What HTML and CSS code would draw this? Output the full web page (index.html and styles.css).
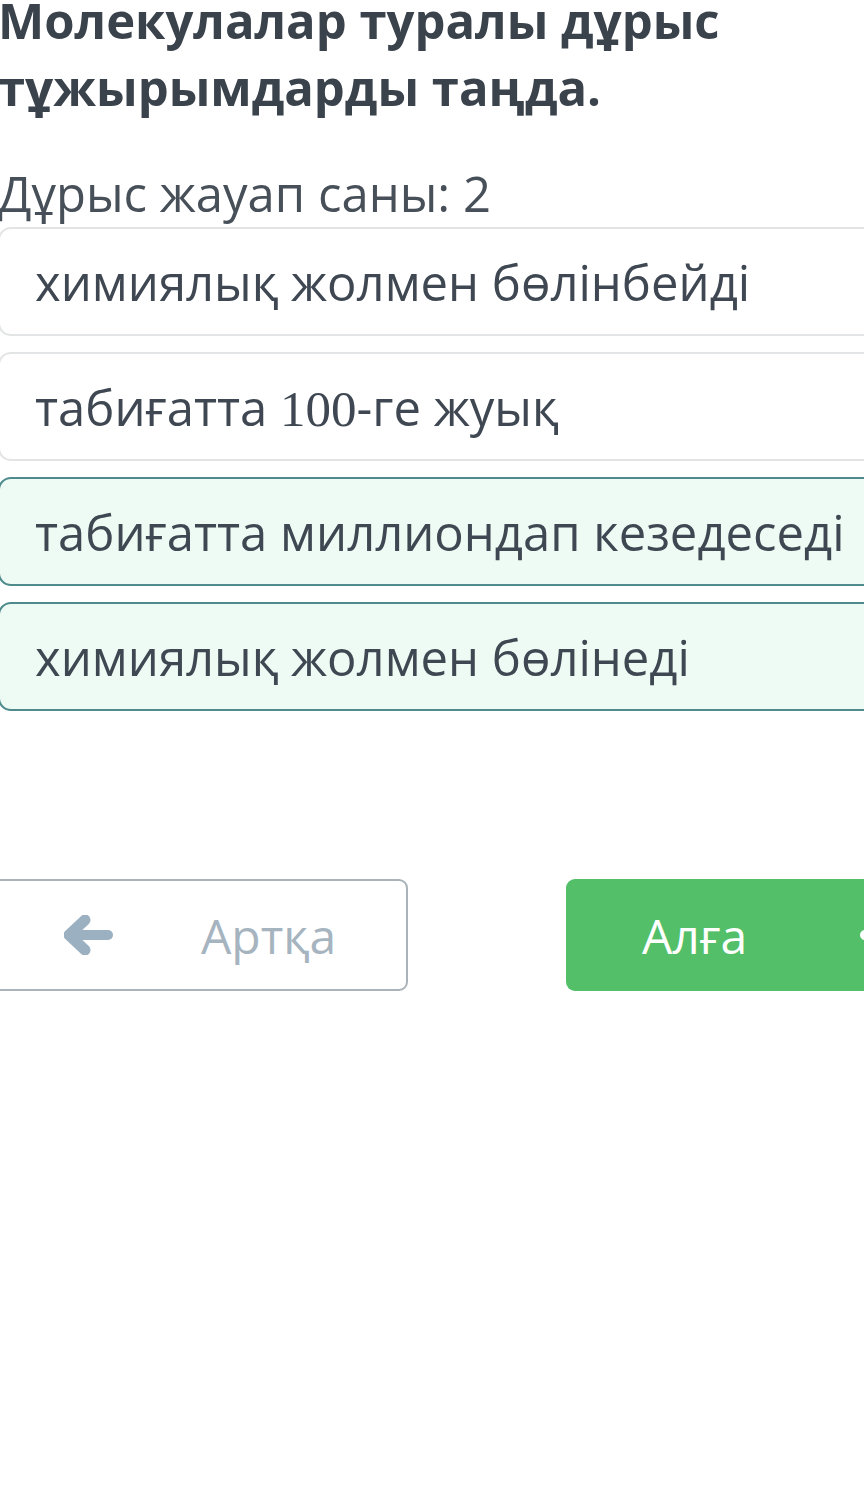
FILE: index.html
```html
<!DOCTYPE html>
<html lang="kk">
<head>
<meta charset="utf-8">
<link rel="stylesheet" href="styles.css">
</head>
<body>
<main class="quiz">
  <h1 class="question">Молекулалар туралы дұрыс тұжырымдарды таңда.</h1>
  <p class="hint">Дұрыс жауап саны: 2</p>
  <ul class="options">
    <li class="option"><span>химиялық жолмен бөлінбейді</span></li>
    <li class="option"><span>табиғатта <span class="num">100</span>-ге жуық</span></li>
    <li class="option selected"><span>табиғатта миллиондап кезедеседі</span></li>
    <li class="option selected"><span>химиялық жолмен бөлінеді</span></li>
  </ul>
  <div class="nav">
    <button class="btn back">
      <svg class="arrow" viewBox="0 0 50 40" width="50" height="40" aria-hidden="true">
        <path d="M21 5 L5 20 L21 35" fill="none" stroke="currentColor" stroke-width="11" stroke-linecap="round" stroke-linejoin="round"/>
        <path d="M9 20 H44" fill="none" stroke="currentColor" stroke-width="10" stroke-linecap="round"/>
      </svg>
      <span>Артқа</span>
    </button>
    <button class="btn next">
      <span>Алға</span>
      <svg class="arrow" viewBox="0 0 50 40" width="50" height="40" aria-hidden="true">
        <path d="M29 5 L45 20 L29 35" fill="none" stroke="currentColor" stroke-width="11" stroke-linecap="round" stroke-linejoin="round"/>
        <path d="M6 20 H41" fill="none" stroke="currentColor" stroke-width="10" stroke-linecap="round"/>
      </svg>
    </button>
  </div>
</main>
</body>
</html>
```

FILE: styles.css
```css
html, body {
  margin: 0;
  padding: 0;
  background: #ffffff;
  overflow: hidden;
}
body {
  font-family: "Open Sans", "Noto Sans", sans-serif;
  color: #3d4650;
}
.quiz {
  margin-left: -2px;
  width: 1000px;
}
.question {
  margin: -13px 0 0 0;
  font-size: 49px;
  font-weight: 700;
  line-height: 67px;
  color: #3a424c;
  width: 780px;
}
.hint {
  margin: 42px 0 4px 0;
  font-size: 49px;
  line-height: 60px;
  color: #474f58;
}
.options {
  list-style: none;
  margin: 0;
  padding: 0;
  display: flex;
  flex-direction: column;
  gap: 16px;
}
.option {
  box-sizing: border-box;
  height: 109px;
  display: flex;
  align-items: center;
  padding-left: 35px;
  border: 2px solid #e3e4e5;
  border-radius: 13px;
  font-size: 49px;
  color: #3f4852;
  background: #fff;
  white-space: nowrap;
}
.option.selected {
  border-color: #4f8b8c;
  background: #eefaf4;
}
.num {
  font-family: "Liberation Serif", serif;
  font-size: 51px;
}
.nav {
  margin-top: 168px;
  display: flex;
  gap: 158px;
  margin-left: -12px;
}
.btn {
  box-sizing: border-box;
  width: 422px;
  height: 112px;
  border-radius: 9px;
  font-family: "Open Sans", "Noto Sans", sans-serif;
  font-size: 48px;
  display: flex;
  align-items: center;
  padding: 0;
}
.btn.back {
  background: #fff;
  border: 2px solid #aab3b9;
  color: #a6b4bf;
  padding-left: 76px;
  gap: 87px;
}
.btn.back .arrow {
  color: #9bb0c1;
}
.btn.next {
  background: #53c069;
  border: none;
  color: #ffffff;
  padding-left: 76px;
  gap: 112px;
}
```
